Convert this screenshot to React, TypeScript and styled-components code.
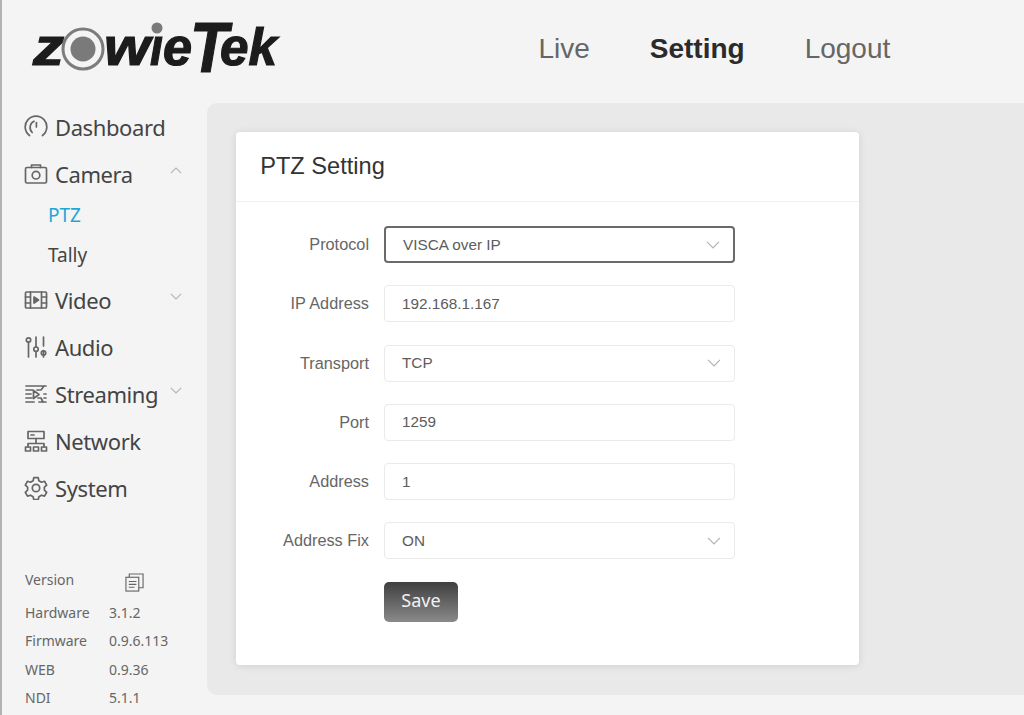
import styled, { createGlobalStyle } from "styled-components";
import type { ReactNode } from "react";

const GlobalStyle = createGlobalStyle`
  html, body {
    margin: 0;
    padding: 0;
    background: #f4f4f4;
    overflow: hidden;
  }
  * { box-sizing: border-box; }
`;

const fields = [
  { label: "Protocol", value: "VISCA over IP", select: true, focused: true },
  { label: "IP Address", value: "192.168.1.167" },
  { label: "Transport", value: "TCP", select: true },
  { label: "Port", value: "1259" },
  { label: "Address", value: "1" },
  { label: "Address Fix", value: "ON", select: true },
];

const versions = [
  { name: "Hardware", value: "3.1.2" },
  { name: "Firmware", value: "0.9.6.113" },
  { name: "WEB", value: "0.9.36" },
  { name: "NDI", value: "5.1.1" },
];

function Logo() {
  return (
    <LogoSvg viewBox="0 0 248 56" width="248" height="56" role="img" aria-label="ZowieTek">
      <LogoText x="-1" y="45" fontSize="51" textLength="31" lengthAdjust="spacingAndGlyphs">z</LogoText>
      <circle cx="49" cy="29" r="20" fill="#f4f4f4" stroke="#7c7c7c" strokeWidth="3" />
      <circle cx="49" cy="29" r="12.5" fill="#7a7a7a" />
      <LogoText x="70" y="45" fontSize="51" textLength="46" lengthAdjust="spacingAndGlyphs">w</LogoText>
      <LogoText x="116" y="45" fontSize="51" textLength="13" lengthAdjust="spacingAndGlyphs">ı</LogoText>
      <circle cx="123" cy="8" r="5.5" fill="#7a7a7a" />
      <LogoText x="129" y="45" fontSize="51" textLength="29" lengthAdjust="spacingAndGlyphs">e</LogoText>
      <LogoText x="156" y="52" fontSize="71" textLength="38" lengthAdjust="spacingAndGlyphs">T</LogoText>
      <LogoText x="186" y="45" fontSize="51" textLength="57" lengthAdjust="spacingAndGlyphs">ek</LogoText>
    </LogoSvg>
  );
}

function Icon({ children }: { children: ReactNode }) {
  return (
    <IconSvg viewBox="0 0 24 24" fill="none" stroke="#666" strokeWidth="1.7" strokeLinecap="round" strokeLinejoin="round">
      {children}
    </IconSvg>
  );
}

const DashboardIcon = () => (
  <Icon>
    <path d="M5.5 20.5A10.8 10.8 0 1 1 18.5 20.5" />
    <path d="M8.2 17.5A7 7 0 0 1 10 6.2" />
    <path d="M12.4 7.5v4.5" />
  </Icon>
);
const CameraIcon = () => (
  <Icon>
    <rect x="1.5" y="5.5" width="21" height="15.5" rx="1.5" />
    <path d="M7.5 5.5V3h9v2.5" />
    <circle cx="12" cy="13.2" r="3.8" />
  </Icon>
);
const VideoIcon = () => (
  <Icon>
    <rect x="1.5" y="4" width="21" height="16" rx="1" />
    <path d="M6.5 4v16M17.5 4v16M1.5 9h5M1.5 15h5M17.5 9h5M17.5 15h5" />
    <path d="M10 9l4.5 3-4.5 3z" fill="#666" />
  </Icon>
);
const AudioIcon = () => (
  <Icon>
    <circle cx="4.5" cy="5" r="2.2" />
    <path d="M4.5 7.2V22M12 2v10M12 16.5V22M19.5 2v9M19.5 15.5V22" />
    <circle cx="12" cy="14.2" r="2.2" />
    <circle cx="19.5" cy="18" r="2.2" />
  </Icon>
);
const StreamingIcon = () => (
  <Icon>
    <path d="M2 4h20M2 8h7M13 8h4l3-4M2 12h5M2 16h6M2 20h8M15 20h7M20 16h2M20 12h2M14 16l3 0 2 4" />
    <path d="M9.5 8.5l5.5 4-5.5 4z" />
  </Icon>
);
const NetworkIcon = () => (
  <Icon>
    <rect x="4" y="2.5" width="16" height="7" />
    <path d="M7 6h3M12 9.5V14M4 18v-3.5h16V18" />
    <rect x="1.5" y="18" width="5" height="4" />
    <rect x="9.5" y="18" width="5" height="4" />
    <rect x="17.5" y="18" width="5" height="4" />
  </Icon>
);
const SystemIcon = () => (
  <Icon>
    <path d="M9.8 2.2h4.4l.7 3 2.6 1.5 3-.9 2.2 3.8-2.3 2.1v3l2.3 2.1-2.2 3.8-3-.9-2.6 1.5-.7 3H9.8l-.7-3-2.6-1.5-3 .9-2.2-3.8 2.3-2.1v-3L1.3 9.6l2.2-3.8 3 .9 2.6-1.5z" transform="translate(0 -.5)" />
    <circle cx="12" cy="12" r="3.7" />
  </Icon>
);

function Chevron({ up }: { up?: boolean }) {
  return (
    <ChevronSvg viewBox="0 0 12 7" fill="none" stroke="#b4b4b4" strokeWidth="1.1">
      <path d={up ? "M.8 6.2 6 1l5.2 5.2" : "M.8.8 6 6l5.2-5.2"} />
    </ChevronSvg>
  );
}

export default function App() {
  return (
    <>
      <GlobalStyle />
      <Page>
        <Header>
          <LogoBox>
            <Logo />
          </LogoBox>
          <TopNav>
            <TopLink>Live</TopLink>
            <TopLink $active>Setting</TopLink>
            <TopLink>Logout</TopLink>
          </TopNav>
        </Header>
        <Body>
          <Sidebar>
            <Menu>
              <MenuItem><DashboardIcon /><MenuLabel>Dashboard</MenuLabel></MenuItem>
              <MenuItem><CameraIcon /><MenuLabel>Camera</MenuLabel><Chevron up /></MenuItem>
              <SubMenu>
                <SubItem $active>PTZ</SubItem>
                <SubItem>Tally</SubItem>
              </SubMenu>
              <MenuItem><VideoIcon /><MenuLabel>Video</MenuLabel><Chevron /></MenuItem>
              <MenuItem><AudioIcon /><MenuLabel>Audio</MenuLabel></MenuItem>
              <MenuItem><StreamingIcon /><MenuLabel>Streaming</MenuLabel><Chevron /></MenuItem>
              <MenuItem><NetworkIcon /><MenuLabel>Network</MenuLabel></MenuItem>
              <MenuItem><SystemIcon /><MenuLabel>System</MenuLabel></MenuItem>
            </Menu>
            <VersionBox>
              <VersionHead>
                <VersionName>Version</VersionName>
                <CopySvg viewBox="0 0 20 20" fill="none" stroke="#666" strokeWidth="1.2">
                  <rect x="1" y="4.5" width="13.5" height="14.5" />
                  <path d="M4.5 4.5V1H19v14.5h-4.5M4 9h8M4 12h8M4 15h6" />
                </CopySvg>
              </VersionHead>
              {versions.map((v) => (
                <VersionRow key={v.name}>
                  <VersionName>{v.name}</VersionName>
                  <span>{v.value}</span>
                </VersionRow>
              ))}
            </VersionBox>
          </Sidebar>
          <Main>
            <Card>
              <CardTitle>PTZ Setting</CardTitle>
              <Form>
                {fields.map((f) => (
                  <Row key={f.label}>
                    <Label>{f.label}</Label>
                    <Field $focused={f.focused}>
                      <span>{f.value}</span>
                      {f.select && <Chevron />}
                    </Field>
                  </Row>
                ))}
                <SaveButton>Save</SaveButton>
              </Form>
            </Card>
          </Main>
        </Body>
      </Page>
    </>
  );
}

const Page = styled.div`
  width: 1024px;
  height: 715px;
  background: #f4f4f4;
  border-left: 2px solid #b2b2b2;
  display: flex;
  flex-direction: column;
  overflow: hidden;
`;

const Header = styled.header`
  height: 103px;
  flex: none;
  display: flex;
`;

const LogoBox = styled.div`
  width: 278px;
  flex: none;
  padding: 20px 0 0 32px;
`;

const LogoSvg = styled.svg`
  display: block;
  overflow: visible;
`;

const LogoText = styled.text`
  font-family: "Liberation Sans", sans-serif;
  font-weight: 700;
  font-style: italic;
  fill: #1c1c1c;
  stroke: #1c1c1c;
  stroke-width: 1.2px;
`;

const TopNav = styled.nav`
  display: flex;
  align-items: center;
  gap: 60px;
  padding: 0 0 5px 258.4px;
`;

const TopLink = styled.a<{ $active?: boolean }>`
  font-family: "Liberation Sans", Arial, sans-serif;
  font-size: 28px;
  font-weight: ${({ $active }) => ($active ? 700 : 400)};
  color: ${({ $active }) => ($active ? "#2b2b2b" : "#666")};
`;

const Body = styled.div`
  height: 592px;
  flex: none;
  display: flex;
`;

const Sidebar = styled.aside`
  width: 205px;
  flex: none;
  font-family: "Noto Sans", "Open Sans", sans-serif;
`;

const Menu = styled.ul`
  list-style: none;
  margin: 0;
  padding: 0 0 0 22px;
`;

const MenuItem = styled.li`
  height: 47px;
  display: flex;
  align-items: center;
  gap: 7px;
  color: #444;
  font-size: 22px;

  > svg:last-child {
    margin: 0 25px 6px 0;
  }
`;

const MenuLabel = styled.span`
  flex: 1;
  letter-spacing: -0.4px;
`;

const SubMenu = styled.ul`
  list-style: none;
  margin: -1.8px 0 1.2px;
  padding: 0;
`;

const SubItem = styled.li<{ $active?: boolean }>`
  height: 40px;
  display: flex;
  align-items: center;
  padding-left: 24px;
  font-size: 19px;
  color: ${({ $active }) => ($active ? "#1fa5d8" : "#444")};
`;

const IconSvg = styled.svg`
  width: 24px;
  height: 24px;
  flex: none;
`;

const ChevronSvg = styled.svg`
  width: 12px;
  height: 7px;
  flex: none;
`;

const VersionBox = styled.div`
  margin-top: 55.9px;
  padding-left: 23px;
  font-size: 14px;
  color: #666;
`;

const VersionHead = styled.div`
  display: flex;
  align-items: center;
  height: 24px;
  margin-bottom: 7px;
`;

const VersionRow = styled.div`
  display: flex;
  align-items: center;
  height: 28.4px;
`;

const VersionName = styled.span`
  width: 84px;
  flex: none;
`;

const CopySvg = styled.svg`
  width: 19px;
  height: 19px;
  margin: 7px 0 0 16px;
`;

const Main = styled.main`
  flex: 1;
  background: #e9e9e9;
  border-radius: 10px 0 0 10px;
  padding: 29px 0 0 29px;
  height: 592px;
`;

const Card = styled.section`
  width: 623px;
  height: 533px;
  background: #fff;
  border-radius: 4px;
  box-shadow: 0 1px 8px rgba(0, 0, 0, 0.1);
  font-family: "Liberation Sans", Arial, sans-serif;
`;

const CardTitle = styled.h2`
  margin: 0;
  height: 70px;
  padding: 0 0 1px 24.2px;
  display: flex;
  align-items: center;
  font-size: 23.6px;
  font-weight: 400;
  color: #333;
  border-bottom: 1px solid #f0f0f0;
`;

const Form = styled.form`
  display: flex;
  flex-direction: column;
  gap: 22.3px;
  padding-top: 24px;
`;

const Row = styled.div`
  display: flex;
  align-items: center;
  gap: 15px;
`;

const Label = styled.label`
  width: 133px;
  text-align: right;
  font-size: 16.3px;
  color: #666;
`;

const Field = styled.div<{ $focused?: boolean }>`
  width: 351px;
  height: 37px;
  display: flex;
  align-items: center;
  justify-content: space-between;
  padding-left: 17px;
  background: #fff;
  border-radius: 4px;
  border: ${({ $focused }) => ($focused ? "2px solid #6a6a6a" : "1px solid #eaeaea")};
  font-size: 15.3px;
  color: #5c5c5c;

  svg {
    width: 14px;
    height: 8px;
    margin-right: 13px;
  }
`;

const SaveButton = styled.button`
  width: 74px;
  height: 40px;
  margin-left: 148px;
  border: none;
  border-radius: 5px;
  background: linear-gradient(#3f3f3f, #8a8a8a);
  color: #f2f2f2;
  font-family: "Noto Sans", "Open Sans", sans-serif;
  font-size: 18px;
  padding: 0 0 3px;
`;
